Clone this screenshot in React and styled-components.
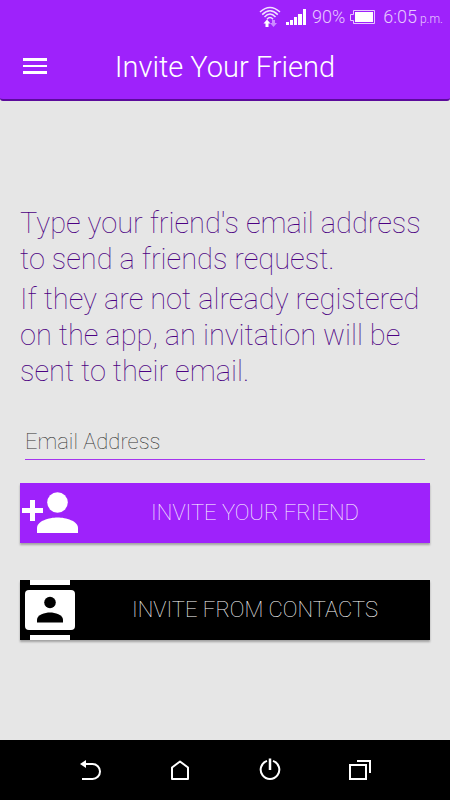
import React, { useState } from "react";
import styled, { createGlobalStyle } from "styled-components";

const purple = "#9e22fb";

const GlobalStyle = createGlobalStyle`
  *, *::before, *::after { box-sizing: border-box; }
  body { margin: 0; background: #e6e6e6; }
  button, input { font: inherit; }
`;

const Screen = styled.div`
  display: flex;
  flex-direction: column;
  min-height: 100vh;
  background: #e6e6e6;
  font-family: Roboto, "Liberation Sans", sans-serif;
  font-weight: 100;
`;

const Header = styled.header`
  background: ${purple};
  border-bottom: 2px solid #5c0b9c;
  border-radius: 0 0 3px 3px;
  color: #fff;
`;

const StatusBar = styled.div`
  display: flex;
  align-items: center;
  justify-content: flex-end;
  height: 33px;
  padding-right: 7px;
  font-size: 18px;
  font-weight: 300;
  color: #e6c8ff;

  svg { display: block; flex: none; }
`;

const SignalGroup = styled.div`
  display: flex;
  align-items: center;
  gap: 5px;
  margin-right: 6px;
`;

const Battery = styled.div`
  display: flex;
  align-items: center;
  gap: 5px;
  margin-right: 8px;
`;

const Clock = styled.time`
  display: flex;
  align-items: baseline;
  gap: 3px;

  small { font-size: 12px; }
`;

const AppBar = styled.div`
  display: grid;
  grid-template-columns: 70px 1fr 70px;
  align-items: center;
  height: 66px;
`;

const MenuButton = styled.button`
  display: grid;
  place-items: center;
  width: 70px;
  height: 64px;
  padding: 0;
  border: 0;
  background: none;
  color: #fff;
  cursor: pointer;
`;

const Title = styled.h1`
  margin: 0;
  padding-top: 2px;
  font-size: 29px;
  line-height: 40px;
  font-weight: 300;
  text-align: center;
  white-space: nowrap;
`;

const Main = styled.main`
  display: flex;
  flex: 1;
  flex-direction: column;
  justify-content: center;
  padding: 3px 20px 0;
`;

const Message = styled.p`
  margin: 0 0 4px;
  color: #4b0082;
  font-size: 29px;
  line-height: 36px;
`;

const Form = styled.form`
  display: flex;
  flex-direction: column;
  margin-top: 29px;
`;

const EmailInput = styled.input`
  height: 38px;
  min-width: 0;
  margin: 0 5px 23px;
  padding: 2px 0 0;
  border: 0;
  border-bottom: 1px solid #a535ef;
  border-radius: 0;
  outline: 0;
  background: none;
  color: #333;
  font-size: 22px;

  &::placeholder { color: #333; opacity: 1; }
`;

const ActionButton = styled.button`
  display: flex;
  align-items: center;
  height: 60px;
  margin-bottom: 37px;
  padding: 0;
  border: 0;
  background: ${(p) => p.$color};
  box-shadow: 0 2px 2px rgba(0, 0, 0, 0.3);
  color: #fff;
  font-size: 22px;
  cursor: pointer;

  svg { display: block; flex: none; }
  &:last-child { margin-bottom: 0; }
`;

const ActionLabel = styled.span`
  flex: 1;
  text-align: center;
  white-space: nowrap;
`;

const NavBar = styled.nav`
  display: flex;
  justify-content: center;
  height: 60px;
  background: #000;
`;

const NavButton = styled.button`
  display: grid;
  place-items: center;
  flex: 0 1 90px;
  padding: 0;
  border: 0;
  background: none;
  color: #fff;
  cursor: pointer;
`;

function WifiIcon() {
  return (
    <svg width="22" height="22" viewBox="0 0 22 22" fill="none" stroke="#f3e2ff" strokeWidth="1.5">
      <path d="M1 6Q11-3 21 6M3.200 8.600Q11 1 18.800 8.600M5.500 11Q11 5.200 16.500 11M8 13.200Q11 10 14 13.200" />
      <path d="M4.500 17.500 8 13.500l3.500 4H9.500V21h-3v-3.500z" fill="#fff" stroke="none" />
      <path d="M11 17h2v-3h3v3h2L14.500 21z" fill="#cb8cff" stroke="none" />
    </svg>
  );
}

function SignalIcon() {
  return (
    <svg width="20" height="16" viewBox="0 0 20 16" fill="#fff">
      <path d="M0 13h3v3H0zM4 11h3v5H4zM8 8h3v8H8zM12 5h4v11h-4zM17 0h3v16h-3z" />
    </svg>
  );
}

function BatteryIcon() {
  return (
    <svg width="25" height="14" viewBox="0 0 25 14" fill="#fff">
      <path d="M3.500.5h21v13h-21v-3h-3v-6h3z" fill="none" stroke="currentColor" />
      <path d="M5 2h18v10H5z" />
    </svg>
  );
}

function MenuIcon() {
  return (
    <svg width="24" height="16" viewBox="0 0 24 16" fill="currentColor">
      <path d="M0 0h24v3H0zM0 7h24v2H0zM0 13h24v3H0z" />
    </svg>
  );
}

function AddPersonIcon() {
  return (
    <svg width="60" height="60" viewBox="0 0 60 60" fill="#fff">
      <path d="M10 17h5v8h8v5h-8v8h-5v-8H2v-5h8z" />
      <circle cx="37.500" cy="19.500" r="10.300" />
      <path d="M17 50v-5c0-7 12-10.500 20.500-10.500S58 38 58 45v5z" />
    </svg>
  );
}

function ContactsIcon() {
  return (
    <svg width="60" height="60" viewBox="0 0 60 60" fill="#fff">
      <path d="M10 0h40v5H10zM10 55h40v5H10z" />
      <rect x="5" y="10" width="50" height="40" rx="4" />
      <circle cx="30" cy="22.500" r="5.800" fill="#000" />
      <path d="M17 42.500v-3c0-4.500 8-7 13-7s13 2.500 13 7v3z" fill="#000" />
    </svg>
  );
}

const navItems = [
  {
    label: "Back",
    icon: (
      <>
        <path d="M9 9h8.500a7.500 7.500 0 0 1 0 15H7" />
        <path d="M5 9l6-4v8z" fill="currentColor" stroke="none" />
      </>
    ),
  },
  { label: "Home", icon: <path d="M7 24V12.500L15 6.500l8 6V24z" strokeLinejoin="round" /> },
  {
    label: "Power",
    icon: (
      <>
        <path d="M12 5.900a9.300 9.300 0 1 0 6 0" />
        <path d="M15 3.500v11.500" strokeWidth="2.500" />
      </>
    ),
  },
  {
    label: "Recent apps",
    icon: <path d="M5 10h16v14H5zM12 6h13v12" />,
  },
];

export default function App() {
  const [email, setEmail] = useState("");

  return (
    <Screen>
      <GlobalStyle />
      <Header>
        <StatusBar>
          <SignalGroup>
            <WifiIcon />
            <SignalIcon />
          </SignalGroup>
          <Battery>
            <span>90%</span>
            <BatteryIcon />
          </Battery>
          <Clock dateTime="18:05">
            6:05 <small>p.m.</small>
          </Clock>
        </StatusBar>
        <AppBar>
          <MenuButton type="button" aria-label="Menu">
            <MenuIcon />
          </MenuButton>
          <Title>Invite Your Friend</Title>
        </AppBar>
      </Header>

      <Main>
        <Message>Type your friend's email address to send a friends request.</Message>
        <Message>
          If they are not already registered on the app, an invitation will be sent to their email.
        </Message>
        <Form onSubmit={(e) => e.preventDefault()}>
          <EmailInput
            type="email"
            aria-label="Email Address"
            placeholder="Email Address"
            value={email}
            onChange={(e) => setEmail(e.target.value)}
          />
          <ActionButton type="submit" $color={purple}>
            <AddPersonIcon />
            <ActionLabel>INVITE YOUR FRIEND</ActionLabel>
          </ActionButton>
          <ActionButton type="button" $color="#000">
            <ContactsIcon />
            <ActionLabel>INVITE FROM CONTACTS</ActionLabel>
          </ActionButton>
        </Form>
      </Main>

      <NavBar aria-label="System navigation">
        {navItems.map(({ label, icon }) => (
          <NavButton key={label} type="button" aria-label={label}>
            <svg width="30" height="30" viewBox="0 0 30 30" fill="none" stroke="currentColor" strokeWidth="2">
              {icon}
            </svg>
          </NavButton>
        ))}
      </NavBar>
    </Screen>
  );
}
